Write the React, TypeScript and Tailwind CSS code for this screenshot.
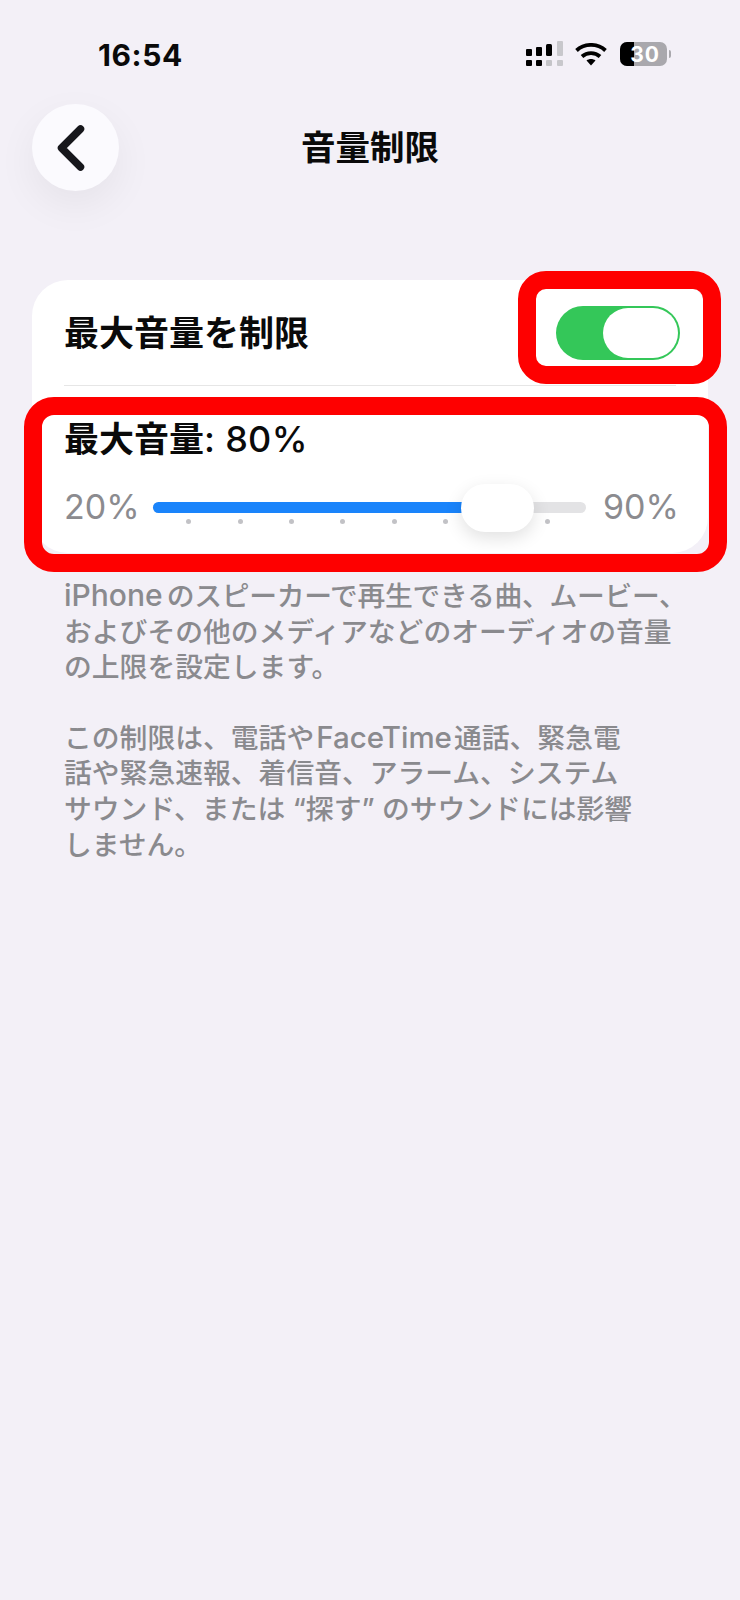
/**
 * 音量制限 settings screen
 */

const jpFont = "font-['Inter','Noto_Sans_CJK_JP',sans-serif]"

const tickPositions = [33, 85, 136, 187, 238.5, 290, 392]

function SignalIcon() {
  return (
    <svg width="38" height="26" viewBox="0 0 38 26" className="block">
      <rect x="0" y="8" width="6" height="7" rx="1" fill="#000" />
      <rect x="10" y="6" width="6" height="9" rx="1" fill="#000" />
      <rect x="20" y="3" width="6" height="12" rx="1.5" fill="#000" />
      <rect x="31" y="0" width="6" height="15" rx="1" fill="#c8c8cc" />
      <rect x="0" y="19" width="6" height="6" rx="1" fill="#000" />
      <rect x="10" y="19" width="6" height="6" rx="1" fill="#000" />
      <rect x="20" y="19" width="6" height="6" rx="1" fill="#c4c4c8" />
      <rect x="31" y="19" width="6" height="6" rx="1" fill="#c8c8cc" />
    </svg>
  )
}

function WifiIcon() {
  return (
    <svg width="32" height="23" viewBox="0 0 32 23" className="block" fill="none" stroke="#000" strokeWidth="3.8">
      <path d="M1.5 7.5C9.5 0 22.5 0 30.5 7.5" />
      <path d="M7 13.5C12 9 20 9 25 13.5" />
      <path d="M11.5 17.5L16 22.5L20.5 17.5C18 15.5 14 15.5 11.5 17.5Z" fill="#000" stroke="none" />
    </svg>
  )
}

function BatteryIcon() {
  return (
    <div className="flex items-center gap-[2px]">
      <div className="relative w-[47px] h-[24px] rounded-[7px] bg-[#a9a8ad] overflow-hidden">
        <div className="h-full w-[14px] bg-black" />
        <span className="absolute inset-0 flex items-center justify-center text-white font-['Inter',sans-serif] font-bold text-[21px] leading-none pl-[3px] tracking-[1px]">
          30
        </span>
      </div>
      <div className="w-[2px] h-[8px] rounded-r-sm bg-[#a9a8ad]" />
    </div>
  )
}

function StatusBar() {
  return (
    <div className="h-[104px] flex items-start justify-between pl-[98px] pr-[69px] pt-[38px]">
      <span className="font-['Inter',sans-serif] font-bold text-[30px] leading-[34px] tracking-[0.6px] text-[#0a0a0a]">
        16:54
      </span>
      <div className="flex items-center pt-[3px]">
        <SignalIcon />
        <div className="ml-[11px] mr-[13px]">
          <WifiIcon />
        </div>
        <BatteryIcon />
      </div>
    </div>
  )
}

function NavBar() {
  return (
    <div className="grid grid-cols-[1fr_auto_1fr] items-center px-[32px]">
      <button className="w-[87px] h-[87px] rounded-full bg-[#fbfafe] shadow-[0_14px_40px_rgba(0,0,0,0.06)] flex items-center justify-center">
        <svg width="32" height="48" viewBox="0 0 32 48" fill="none" className="block mr-[9px]">
          <path d="M25.5 5L6.5 24L25.5 43" stroke="#17171c" strokeWidth="7.5" strokeLinecap="round" strokeLinejoin="round" />
        </svg>
      </button>
      <h1 className={`${jpFont} font-bold text-[34.5px] leading-[44px] text-[#0a0a0a]`}>音量制限</h1>
      <div />
    </div>
  )
}

function VolumeSlider() {
  return (
    <div className="flex items-center pl-[32px] mt-[27px]">
      <span className="w-[89px] shrink-0 font-['Inter',sans-serif] text-[34px] leading-[38px] text-[#8b8b8f]">20%</span>
      <div className="relative w-[433px] shrink-0 h-[11px] rounded-full bg-[#e3e3e5]">
        <div className="h-full w-[320px] rounded-l-full bg-[#1a84fb]" />
        {tickPositions.map(left => (
          <span
            key={left}
            className="absolute top-[17px] w-[5px] h-[5px] rounded-full bg-[#c2c2c6]"
            style={{ left }}
          />
        ))}
        <div className="absolute left-[308px] top-[-18px] w-[73px] h-[48px] rounded-[24px] bg-white shadow-[0_6px_18px_rgba(0,0,0,0.12)]" />
      </div>
      <span className="ml-[17px] font-['Inter',sans-serif] text-[34px] leading-[38px] text-[#8b8b8f]">90%</span>
    </div>
  )
}

function SettingsCard() {
  return (
    <div className="relative mx-[32px] h-[273px] rounded-[36px] bg-white">
      <div className="mx-[32px] h-[106px] flex items-center justify-between border-b border-[#e6e6e6]">
        <span className={`${jpFont} font-semibold text-[35px] leading-[44px] text-[#0a0a0a]`}>最大音量を制限</span>
        <div className="w-[124px] h-[54px] rounded-full bg-[#34c759] flex items-center justify-end pr-[2px] mr-[-4px]">
          <div className="w-[75px] h-[50px] rounded-full bg-white" />
        </div>
      </div>
      <div className={`${jpFont} mt-[31px] ml-[32px] font-semibold text-[35px] leading-[44px] text-[#0a0a0a]`}>
        最大音量<span className="font-medium text-[36px] tracking-[0.3px]">: 80%</span>
      </div>
      <VolumeSlider />

      {/* 赤枠の注釈 */}
      <div className="absolute left-[486px] top-[-9px] w-[203px] h-[113px] rounded-[28px] border-[18px] border-[#fe0000] pointer-events-none" />
      <div className="absolute left-[-8px] top-[117px] w-[703px] h-[175px] rounded-[30px] border-[18px] border-[#fe0000] pointer-events-none" />
    </div>
  )
}

export default function App() {
  return (
    <div className="w-[740px] h-[1600px] bg-[#f3f0f7] overflow-hidden">
      <StatusBar />
      <NavBar />
      <div className="mt-[89px]">
        <SettingsCard />
      </div>
      <div className={`${jpFont} mt-[26px] pl-[64px] font-medium text-[27.8px] leading-[35.6px] text-[#8a8a8e] whitespace-nowrap`}>
        <p>
          <span className="text-[30px] leading-none mr-[4px]">iPhone</span>
          <span className="tracking-[-0.3px]">のスピーカーで再生できる曲、ムービー、</span>
          <br />
          およびその他のメディアなどのオーディオの音量
          <br />
          の上限を設定します。
        </p>
        <p className="mt-[35px]">
          この制限は、電話や<span className="text-[29.5px] leading-none mx-[2px]">FaceTime</span>通話、緊急電
          <br />
          話や緊急速報、着信音、アラーム、システム
          <br />
          サウンド、または “探す” のサウンドには影響
          <br />
          しません。
        </p>
      </div>
    </div>
  )
}
